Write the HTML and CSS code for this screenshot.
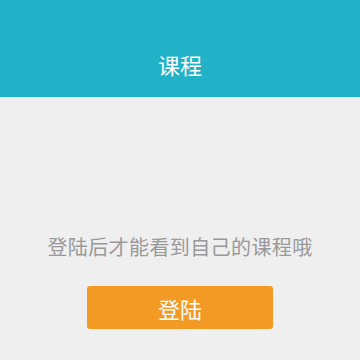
FILE: index.html
```html
<!DOCTYPE html>
<html lang="zh-CN">
<head>
    <meta charset="UTF-8">
    <meta name="viewport" content="width=device-width, initial-scale=1.0">
    <title>课程</title>
    <link rel="stylesheet" href="styles.css">
</head>
<body>
    <div class="header">
        <h1 class="title">课程</h1>
    </div>
    <div class="content">
        <div class="tip">登陆后才能看到自己的课程哦</div>
        <button class="login-button">登陆</button>
    </div>
</body>
</html>
```

FILE: styles.css
```css
body {
    margin: 0;
    background-color: #efefef;
    font-family: "Noto Sans CJK SC", "Noto Sans", sans-serif;
}
.header {
    height: 97px;
    background-color: #21b2c8;
    display: flex;
    align-items: flex-end;
    justify-content: center;
    border-bottom: 1px solid #e2e2e2;
}
.title {
    margin: 0 0 21px 0;
    font-size: 22px;
    font-weight: normal;
    line-height: 24px;
    color: #fff;
}
.content {
    display: flex;
    flex-direction: column;
    align-items: center;
    padding-top: 136px;
}
.tip {
    font-size: 20px;
    line-height: 26px;
    letter-spacing: 0.4px;
    color: #999;
}
.login-button {
    margin-top: 26px;
    width: 186px;
    height: 43px;
    border: none;
    border-radius: 3px;
    background-color: #f39a24;
    color: #fff;
    font-family: inherit;
    font-size: 22px;
    cursor: pointer;
}
```
